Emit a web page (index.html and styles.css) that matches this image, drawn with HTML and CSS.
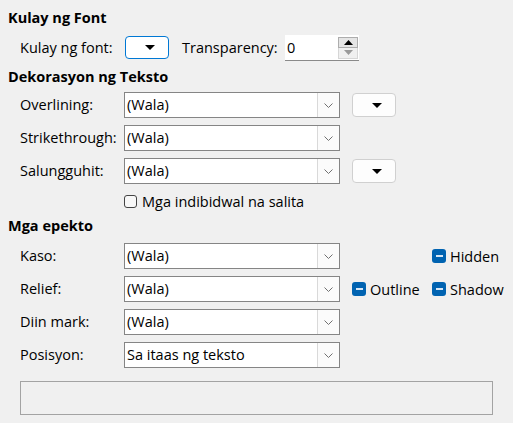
FILE: index.html
```html
<!DOCTYPE html>
<html lang="tl">
<head>
<meta charset="utf-8">
<link rel="stylesheet" href="styles.css">
</head>
<body>
<div class="page">
  <div class="heading h1">Kulay ng Font</div>
  <div class="fontrow">
    <span class="lbl lbl-font">Kulay ng font:</span>
    <button class="colorbtn active"><svg width="10" height="5" viewBox="0 0 10 5"><path d="M0 0H10L5 5Z" fill="#000"/></svg></button>
    <span class="lbl lbl-trans">Transparency:</span>
    <div class="spin">
      <span class="spin-val">0</span>
      <div class="spin-btns">
        <span class="spin-up"><svg width="9" height="5" viewBox="0 0 9 5"><path d="M0 5H9L4.5 0Z" fill="#000"/></svg></span>
        <span class="spin-down"><svg width="9" height="5" viewBox="0 0 9 5"><path d="M0 0H9L4.5 5Z" fill="#9a9a9a"/></svg></span>
      </div>
    </div>
  </div>

  <div class="heading h2">Dekorasyon ng Teksto</div>
  <div class="grid deco">
    <span class="lbl">Overlining:</span>
    <div class="combo"><span class="combo-text">(Wala)</span><span class="combo-btn"><svg width="9" height="5" viewBox="0 0 9 5"><path d="M0.5 0.5L4.5 4.5L8.5 0.5" fill="none" stroke="#707070" stroke-width="1"/></svg></span></div>
    <div class="extra"><button class="colorbtn"><svg width="10" height="5" viewBox="0 0 10 5"><path d="M0 0H10L5 5Z" fill="#000"/></svg></button></div>
    <span></span>

    <span class="lbl">Strikethrough:</span>
    <div class="combo"><span class="combo-text">(Wala)</span><span class="combo-btn"><svg width="9" height="5" viewBox="0 0 9 5"><path d="M0.5 0.5L4.5 4.5L8.5 0.5" fill="none" stroke="#707070" stroke-width="1"/></svg></span></div>
    <span></span>
    <span></span>

    <span class="lbl">Salungguhit:</span>
    <div class="combo"><span class="combo-text">(Wala)</span><span class="combo-btn"><svg width="9" height="5" viewBox="0 0 9 5"><path d="M0.5 0.5L4.5 4.5L8.5 0.5" fill="none" stroke="#707070" stroke-width="1"/></svg></span></div>
    <div class="extra"><button class="colorbtn"><svg width="10" height="5" viewBox="0 0 10 5"><path d="M0 0H10L5 5Z" fill="#000"/></svg></button></div>
    <span></span>

    <span></span>
    <label class="check-row"><span class="cb"></span><span>Mga indibidwal na salita</span></label>
    <span></span>
    <span></span>
  </div>

  <div class="heading h3">Mga epekto</div>
  <div class="grid effects">
    <span class="lbl">Kaso:</span>
    <div class="combo"><span class="combo-text">(Wala)</span><span class="combo-btn"><svg width="9" height="5" viewBox="0 0 9 5"><path d="M0.5 0.5L4.5 4.5L8.5 0.5" fill="none" stroke="#707070" stroke-width="1"/></svg></span></div>
    <span></span>
    <label class="tri"><span class="cb-tri"></span><span>Hidden</span></label>

    <span class="lbl">Relief:</span>
    <div class="combo"><span class="combo-text">(Wala)</span><span class="combo-btn"><svg width="9" height="5" viewBox="0 0 9 5"><path d="M0.5 0.5L4.5 4.5L8.5 0.5" fill="none" stroke="#707070" stroke-width="1"/></svg></span></div>
    <label class="tri extra"><span class="cb-tri"></span><span>Outline</span></label>
    <label class="tri"><span class="cb-tri"></span><span>Shadow</span></label>

    <span class="lbl">Diin mark:</span>
    <div class="combo"><span class="combo-text">(Wala)</span><span class="combo-btn"><svg width="9" height="5" viewBox="0 0 9 5"><path d="M0.5 0.5L4.5 4.5L8.5 0.5" fill="none" stroke="#707070" stroke-width="1"/></svg></span></div>
    <span></span>
    <span></span>

    <span class="lbl">Posisyon:</span>
    <div class="combo"><span class="combo-text">Sa itaas ng teksto</span><span class="combo-btn"><svg width="9" height="5" viewBox="0 0 9 5"><path d="M0.5 0.5L4.5 4.5L8.5 0.5" fill="none" stroke="#707070" stroke-width="1"/></svg></span></div>
    <span></span>
    <span></span>
  </div>

  <div class="preview"></div>
</div>
</body>
</html>
```

FILE: styles.css
```css
html, body {
  margin: 0;
  padding: 0;
  background: #f0f0f0;
}
body {
  font-family: "Open Sans", "Noto Sans", sans-serif;
  font-size: 14.5px;
  color: #000;
}
.page {
  display: flex;
  flex-direction: column;
  padding: 8px 0 0 8px;
  width: 505px;
  box-sizing: border-box;
}
.heading {
  font-weight: bold;
  line-height: 20px;
  height: 20px;
}
.h2 { margin-top: 7px; }
.h3 { margin-top: 5px; }

.lbl {
  line-height: 20px;
  white-space: nowrap;
}

.fontrow {
  display: flex;
  align-items: center;
  margin-top: 7px;
  height: 25px;
  padding-left: 12px;
}
.lbl-font { width: 105px; }
.lbl-trans { width: 103px; margin-left: 13px; }

.colorbtn {
  width: 44px;
  height: 24px;
  box-sizing: border-box;
  border: 1px solid #d0d0d0;
  border-radius: 4px;
  background: #fdfdfd;
  display: flex;
  align-items: center;
  justify-content: center;
  padding: 0 0 0 6px;
  margin: 0;
}
.colorbtn.active {
  border-color: #0078d4;
  background: #fff;
  height: 23px;
}

.spin {
  display: flex;
  width: 74px;
  height: 26px;
  box-sizing: border-box;
  background: #fff;
  border-bottom: 1px solid #8a8a8a;
  padding: 2px 1px 1px 2px;
}
.spin-val {
  flex: 1;
  line-height: 22px;
}
.spin-btns {
  display: flex;
  flex-direction: column;
  width: 20px;
}
.spin-up, .spin-down {
  flex: 1;
  display: flex;
  align-items: center;
  justify-content: center;
  box-sizing: border-box;
}
.spin-up {
  background: #e5e5e5;
  border: 1px solid #adadad;
}
.spin-down {
  background: #f0f0f0;
  border: 1px solid #d6d6d6;
  border-top: none;
}

.grid {
  display: grid;
  grid-template-columns: 104px 216px 92px auto;
  row-gap: 7px;
  padding-left: 12px;
  align-items: center;
}
.deco { margin-top: 5px; }
.effects { margin-top: 7px; }

.extra { padding-left: 12px; }

.combo {
  display: flex;
  height: 26px;
  box-sizing: border-box;
  border: 1px solid #858585;
  background: #fff;
}
.combo-text {
  flex: 1;
  padding-left: 2px;
  line-height: 24px;
  white-space: nowrap;
}
.combo-btn {
  width: 21px;
  border-left: 1px solid #d9d9d9;
  background: #fbfbfb;
  display: flex;
  align-items: center;
  justify-content: center;
}

.check-row {
  display: flex;
  align-items: center;
  height: 20px;
  gap: 5px;
}
.cb {
  width: 13px;
  height: 13px;
  box-sizing: border-box;
  border: 1px solid #444;
  border-radius: 3px;
  background: #f8f8f8;
}

.tri {
  display: flex;
  align-items: center;
  gap: 4px;
  white-space: nowrap;
}
.cb-tri {
  width: 14px;
  height: 14px;
  border-radius: 3px;
  background: #0063b1;
  display: flex;
  align-items: center;
  justify-content: center;
}
.cb-tri::after {
  content: "";
  width: 7px;
  height: 2px;
  background: #d7e6f4;
}

.preview {
  margin: 13px 0 0 12px;
  width: 473px;
  height: 34px;
  box-sizing: border-box;
  border: 1px solid #a3a3a3;
}
```
